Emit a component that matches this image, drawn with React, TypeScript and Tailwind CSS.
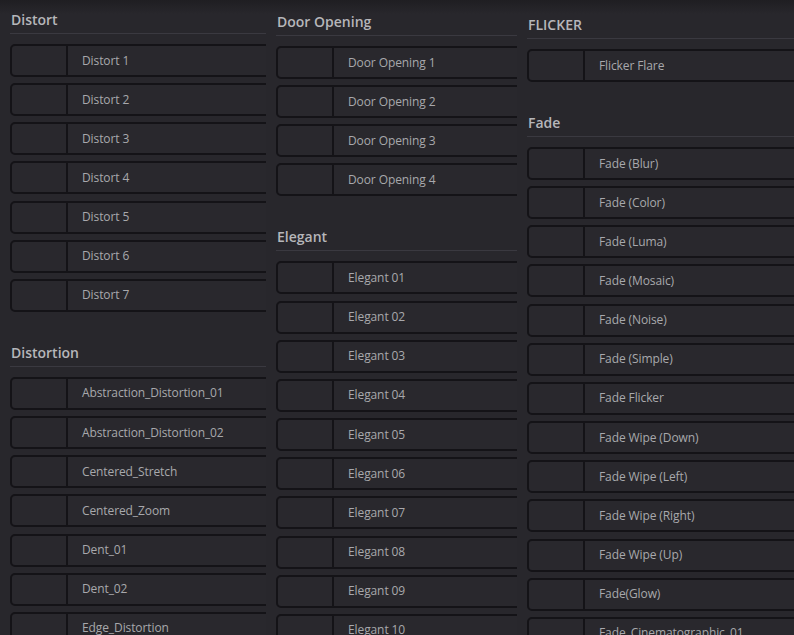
import React from 'react';

type Section = { title: string; items: string[] };

const col1: Section[] = [
  { title: 'Distort', items: ['Distort 1', 'Distort 2', 'Distort 3', 'Distort 4', 'Distort 5', 'Distort 6', 'Distort 7'] },
  {
    title: 'Distortion',
    items: ['Abstraction_Distortion_01', 'Abstraction_Distortion_02', 'Centered_Stretch', 'Centered_Zoom', 'Dent_01', 'Dent_02', 'Edge_Distortion'],
  },
];

const col2: Section[] = [
  { title: 'Door Opening', items: ['Door Opening 1', 'Door Opening 2', 'Door Opening 3', 'Door Opening 4'] },
  {
    title: 'Elegant',
    items: ['Elegant 01', 'Elegant 02', 'Elegant 03', 'Elegant 04', 'Elegant 05', 'Elegant 06', 'Elegant 07', 'Elegant 08', 'Elegant 09', 'Elegant 10'],
  },
];

const col3: Section[] = [
  { title: 'FLICKER', items: ['Flicker Flare'] },
  {
    title: 'Fade',
    items: [
      'Fade (Blur)',
      'Fade (Color)',
      'Fade (Luma)',
      'Fade (Mosaic)',
      'Fade (Noise)',
      'Fade (Simple)',
      'Fade Flicker',
      'Fade Wipe (Down)',
      'Fade Wipe (Left)',
      'Fade Wipe (Right)',
      'Fade Wipe (Up)',
      'Fade(Glow)',
      'Fade_Cinematographic_01',
    ],
  },
];

const Item: React.FC<{ label: string }> = ({ label }) => (
  <div className="flex h-[33px] w-[320px] shrink-0 rounded-[5px] border-2 border-[#141317] bg-[#29282d]">
    <div className="w-[56px] shrink-0 border-r-2 border-[#141317]" />
    <div className="flex items-center pl-[14px] text-[12px] tracking-[-0.1px] text-[#a8a8ac]">{label}</div>
  </div>
);

const Column: React.FC<{ sections: Section[]; className: string }> = ({ sections, className }) => (
  <div className={`flex flex-col overflow-hidden ${className}`}>
    {sections.map((s) => (
      <div key={s.title} className="mb-[31px] flex flex-col">
        <div className="mb-[10px] border-b border-[#3a3940] pb-[3px] pl-px text-[14px] font-semibold leading-[20px] text-[#b6b6ba]">
          {s.title}
        </div>
        <div className="flex flex-col gap-[6.17px]">
          {s.items.map((i) => (
            <Item key={i} label={i} />
          ))}
        </div>
      </div>
    ))}
  </div>
);

export default function App() {
  return (
    <div
      className="flex h-[635px] w-[794px] gap-[10px] overflow-hidden bg-[linear-gradient(to_bottom,#1f1e22_0px,#28272c_14px,#28272c_100%)] pl-[10px]"
      style={{ fontFamily: '"Open Sans", "Noto Sans", sans-serif' }}
    >
      <Column sections={col1} className="w-[256px] shrink-0 pt-[10px]" />
      <Column sections={col2} className="w-[241px] shrink-0 pt-[12px]" />
      <Column sections={col3} className="flex-1 pt-[15px]" />
    </div>
  );
}
